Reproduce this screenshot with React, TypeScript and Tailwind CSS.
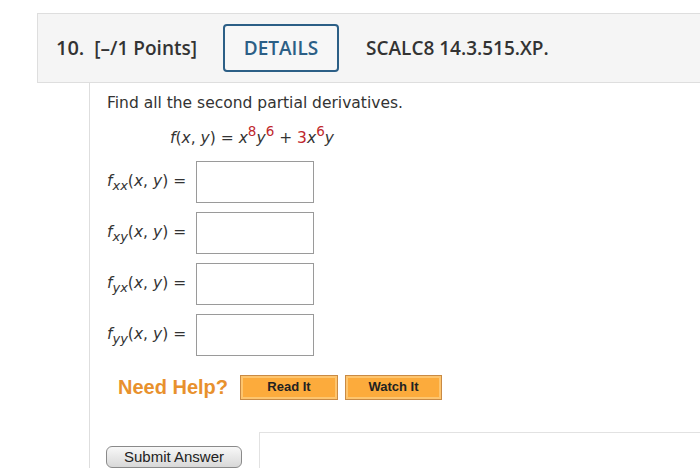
import React from 'react';

const red = 'text-[#c0282d]';

const Sup: React.FC<{ children: React.ReactNode }> = ({ children }) => (
  <span className={`text-[13.5px] inline-block -translate-y-[7px] ${red}`}>{children}</span>
);

const rows = [
  { id: 'xx', sub: 'xx' },
  { id: 'xy', sub: 'xy' },
  { id: 'yx', sub: 'yx' },
  { id: 'yy', sub: 'yy' },
];

const App: React.FC = () => {
  return (
    <div className="w-[700px] h-[468px] bg-white overflow-hidden pt-[13px] pl-[37px] text-[#333]">
      {/* header */}
      <div className="h-[70px] bg-[#f5f5f5] border border-r-0 border-[#dedede] flex items-center pl-[18px] font-['Open_Sans',sans-serif] text-[19px] font-semibold text-[#333]">
        <span className="text-[20px]">10.</span>
        <span className="ml-[10px]">[–/1 Points]</span>
        <div className="ml-[26px] w-[116px] h-[48px] border-2 border-[#2c5f86] rounded-[4px] flex items-center justify-center text-[#2c5f86] font-semibold bg-[#f7f7f7]">
          DETAILS
        </div>
        <span className="ml-[27px]">SCALC8 14.3.515.XP.</span>
      </div>

      {/* body */}
      <div className="ml-[52px] border-l border-[#dedede] h-[389px] flex flex-col font-['DejaVu_Sans',sans-serif] text-[15.5px]">
        <div className="pl-[17px] pt-[10px]">
          <p className="leading-[20px]">Find all the second partial derivatives.</p>
          <p className="mt-[14px] ml-[63px] leading-[22px] text-[15.5px] whitespace-nowrap">
            <i>f</i>(<i>x</i>, <i>y</i>) = <i>x</i>
            <Sup>8</Sup>
            <i>y</i>
            <Sup>6</Sup> + <span className={red}>3</span>
            <i>x</i>
            <Sup>6</Sup>
            <i>y</i>
          </p>
          <div className="mt-[12px] flex flex-col gap-[9px]">
            {rows.map((r) => (
              <div key={r.id} className="flex items-center">
                <span className="w-[89px] text-[15.5px] whitespace-nowrap">
                  <i>f</i>
                  <i className="text-[13px] inline-block translate-y-[4px]">{r.sub}</i>(<i>x</i>, <i>y</i>) =
                </span>
                <input
                  type="text"
                  className="w-[118px] h-[42px] border-[1.5px] border-[#9a9a9a] bg-white outline-none"
                />
              </div>
            ))}
          </div>
          <div className="mt-[16px] ml-[11px] flex items-center font-['Liberation_Sans',Arial,sans-serif]">
            <span className="text-[20px] font-bold text-[#e8912d]">Need Help?</span>
            <button className="ml-[12px] w-[98px] h-[25px] bg-[#fcab3c] border border-[#c98a44] shadow-[inset_0_0_0_2px_#fdc56f] text-[13px] font-bold text-[#222]">
              Read It
            </button>
            <button className="ml-[7px] w-[97px] h-[25px] bg-[#fcab3c] border border-[#c98a44] shadow-[inset_0_0_0_2px_#fdc56f] text-[13px] font-bold text-[#222]">
              Watch It
            </button>
          </div>
        </div>
        <div className="mt-auto flex items-start">
          <div className="w-[169px] pt-[14px] pl-[16px]">
            <button className="w-[136px] h-[22px] rounded-[6px] border border-[#8a8a8a] bg-gradient-to-b from-[#f8f8f8] to-[#d8d8d8] font-['Liberation_Sans',Arial,sans-serif] text-[15px] leading-[20px] text-[#222]">
              Submit Answer
            </button>
          </div>
          <div className="flex-1 h-[40px] border-t border-l border-[#e2e2e2]" />
        </div>
      </div>
    </div>
  );
};

export default App;
